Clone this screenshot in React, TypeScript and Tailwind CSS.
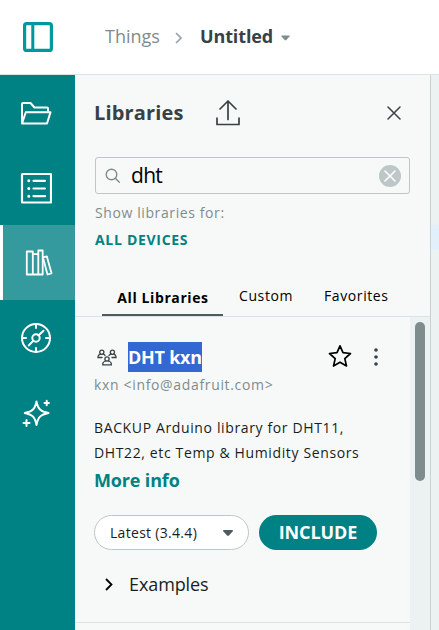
import React from "react";

function PanelIcon() {
  return (
    <svg width="30" height="30" viewBox="0 0 30 30" fill="none" stroke="#00979d">
      <rect x="1.600" y="1.600" width="26.800" height="26.800" rx="2" strokeWidth="3.200" />
      <path d="M9.800 2v26" strokeWidth="3" />
    </svg>
  );
}

function FolderIcon() {
  return (
    <svg width="32" height="24" viewBox="0 0 32 24" fill="none" stroke="#fff" strokeWidth="2" strokeLinejoin="round">
      <path d="M2 21.500V3q0-1 1-1h7.500l4 4.500H27q1 0 1 1V10.500" />
      <path d="M2 22.500L5.800 11.300H30.500L27 22.500Z" />
    </svg>
  );
}

function ListIcon() {
  return (
    <svg width="32" height="32" viewBox="0 0 32 32" fill="none" stroke="#fff" strokeWidth="2.200">
      <rect x="2" y="2" width="29" height="28.500" rx=".5" />
      <path d="M13.500 8.800h11.500M13.500 16.500h11.500M13.500 24.200h11.500" strokeLinecap="round" />
      <path d="M8.800 8.800h.01M8.800 16.500h.01M8.800 24.200h.01" strokeWidth="3" strokeLinecap="round" />
    </svg>
  );
}

function BooksIcon() {
  return (
    <svg width="28" height="28" viewBox="0 0 28 28" fill="none" stroke="#fff" strokeWidth="1.800" strokeLinejoin="round">
      <path d="M1.800 2.500h6v23h-6zM7.800 5.200h5.500v20.300H7.800zM13.300 1.500h4.400v24h-4.400z" />
      <path d="M17.900 8.300l3.900-1 4.700 17-4 1.200z" />
    </svg>
  );
}

function CompassIcon() {
  return (
    <svg width="32" height="32" viewBox="0 0 32 32" fill="none" stroke="#fff" strokeWidth="2" strokeLinecap="round">
      <circle cx="16" cy="16" r="14" />
      <circle cx="16" cy="16" r="3.700" />
      <path d="M16 2v4M16 26v4M2 16h4M26 16h4M18.700 13.200L23.500 8.800M13.200 18.700L8.800 23.400" />
    </svg>
  );
}

function SparkleIcon() {
  return (
    <svg width="28" height="28" viewBox="0 0 28 28" fill="none" stroke="#fff" strokeWidth="2" strokeLinejoin="round" strokeLinecap="round">
      <path d="M14.500 2.500C16 10 18.500 12.600 26.500 14C18.500 15.600 16 18 14.500 26C13 18 10.500 15.600 2.800 14C10.500 12.600 13 10 14.500 2.500Z" />
      <path d="M24.700 1.800v4.400M22.500 4h4.400M4.500 21v6M1.500 24h6" />
    </svg>
  );
}

function UploadIcon() {
  return (
    <svg width="24" height="26" viewBox="0 0 24 26" fill="none" stroke="#374146" strokeWidth="1.700" strokeLinecap="round" strokeLinejoin="round">
      <path d="M12 19.500V1.500M4 9l8-8 8 8M1 18v6.500h22V18" />
    </svg>
  );
}

function SearchIcon() {
  return (
    <svg width="16" height="16" viewBox="0 0 16 16" fill="none" stroke="#7f8c8d" strokeWidth="1.400" strokeLinecap="round">
      <circle cx="6.500" cy="6.500" r="5.300" />
      <path d="M10.300 10.300l4 4" />
    </svg>
  );
}

function CommunityIcon() {
  return (
    <svg width="20" height="17" viewBox="0 0 20 17" fill="none" stroke="#374146" strokeWidth="1.300" strokeLinecap="round">
      <circle cx="4.800" cy="3.200" r="2.100" />
      <circle cx="15.400" cy="3.200" r="2.100" />
      <circle cx="10" cy="10" r="2.100" />
      <path d="M5 8.500H1V7.500Q1.300 5.800 3.500 5.200M6 5.200Q7.500 5.500 8 6.500M15 8.500h4V7.500Q18.700 5.800 16.700 5.200M14.200 5.200Q12.700 5.500 12 6.500M8.500 12Q6 12.800 5.800 14.300V15.800h8.500V14.300Q14 12.800 11.500 12" />
    </svg>
  );
}

function StarIcon() {
  return (
    <svg width="24" height="24" viewBox="0 0 24 24" fill="none" stroke="#000" strokeWidth="1.700" strokeLinejoin="round">
      <path d="M12 1.800l3 6.900 7.500.8-5.700 5.100 1.700 7.400-6.500-3.800-6.500 3.800 1.700-7.400-5.700-5.100 7.500-.8z" />
    </svg>
  );
}

const nav = [
  { name: "Sketchbook", icon: <FolderIcon /> },
  { name: "Examples", icon: <ListIcon /> },
  { name: "Libraries", icon: <BooksIcon />, active: true },
  { name: "Help", icon: <CompassIcon /> },
  { name: "Assistant", icon: <SparkleIcon /> },
];

export default function App() {
  return (
    <div className="flex h-[630px] w-[439px] flex-col overflow-hidden bg-white font-['Open_Sans',sans-serif] whitespace-nowrap">
      <header className="flex h-[75px] shrink-0 items-center border-b border-[#dae3e3] pl-[23px]">
        <PanelIcon />
        <span className="mb-0.5 ml-[52px] text-[18px] leading-6 text-[#7f8c8d]">Things</span>
        <svg className="ml-[15px] mt-0.5" width="7" height="12" viewBox="0 0 7 12" fill="none" stroke="#95a5a6" strokeWidth="1.600"><path d="M1 1l5 5-5 5" /></svg>
        <span className="mb-0.5 ml-[18px] text-[18px] leading-6 font-bold tracking-[-0.1px] text-[#374146]">Untitled</span>
        <svg className="ml-2 mt-0.5" width="9" height="6" viewBox="0 0 9 6" fill="#7f8c8d"><path d="M1 .5h7q1 .2.500 1L5.300 5q-.8.700-1.600 0L.5 1.500Q0 .7 1 .5z" /></svg>
      </header>
      <div className="flex min-h-0 flex-1">
        <nav className="flex w-[75px] shrink-0 flex-col bg-[#008184]">
          {nav.map((item) => (
            <div key={item.name} className={item.active ? "flex h-[75px] items-center justify-center border-l-[3px] border-white bg-[#349a9d] pb-0" : "flex h-[75px] items-center justify-center pr-[3px]"}>
              {item.icon}
            </div>
          ))}
        </nav>
        <main className="flex w-[355px] shrink-0 flex-col bg-[#f7f9f9]">
          <div className="flex h-[82px] shrink-0 items-center pl-[19px] pb-1.5">
            <h1 className="w-[122px] text-[20px] leading-7 font-bold tracking-[0.15px] text-[#374146]">Libraries</h1>
            <UploadIcon />
            <svg className="ml-[147px]" width="14" height="14" viewBox="0 0 14 14" fill="none" stroke="#374146" strokeWidth="1.500" strokeLinecap="round"><path d="M1 1l12 12M13 1L1 13" /></svg>
          </div>
          <div className="ml-5 flex h-[37px] w-[315px] shrink-0 items-center rounded-[3px] border border-[#bdc7c7] pl-[9px] pr-2">
            <SearchIcon />
            <span className="mb-px ml-2.5 flex-1 text-[21px] leading-7 tracking-[-0.7px] text-black">dht</span>
            <svg width="22" height="22" viewBox="0 0 22 22" fill="none"><circle cx="11" cy="11" r="11" fill="#bdc7c7" /><path d="M6 6l10 10M16 6L6 16" stroke="#fff" strokeWidth="1.600" strokeLinecap="round" /></svg>
          </div>
          <p className="mt-[7px] ml-5 text-[14px] leading-6 tracking-[0.6px] text-[#7f8c8d]">Show libraries for:</p>
          <p className="mt-[5px] ml-5 text-[14px] leading-5 font-bold tracking-[0.7px] text-[#008184]">ALL DEVICES</p>
          <div className="mt-[31px] flex h-9 shrink-0 border-b border-[#dae3e3] pl-[27px] text-[14px] leading-6 tracking-[0.6px] text-black">
            <span className="h-[35px] w-[121px] border-b-2 border-[#4e5b61] pt-[5px] pl-px text-center font-bold">All Libraries</span>
            <span className="ml-4 w-[85px] pt-[3px]">Custom</span>
            <span className="pt-[3px]">Favorites</span>
          </div>
          <div className="flex min-h-0 flex-1">
            <article className="h-[306px] w-[335px] border-b border-[#dae3e3] pl-[19px]">
              <div className="flex h-[55px] items-end pl-[3px]">
                <div className="mb-1.5"><CommunityIcon /></div>
                <h2 className="ml-[11px] h-[30px] w-[74px] bg-[#3367d1] text-[18px] leading-[30px] font-bold tracking-[-0.25px] text-white">DHT kxn</h2>
                <div className="mb-[4px] ml-[126px]"><StarIcon /></div>
                <svg className="mb-[5px] ml-[22px]" width="4" height="20" viewBox="0 0 4 20" fill="#374146"><circle cx="2" cy="3" r="1.800" /><circle cx="2" cy="10" r="1.800" /><circle cx="2" cy="17" r="1.800" /></svg>
              </div>
              <p className="mt-px text-[14px] leading-6 tracking-[0.660px] text-[#7f8c8d]">kxn &lt;info@adafruit.com&gt;</p>
              <p className="mt-[18px] text-[14px] leading-[25px] tracking-[0.630px] text-[#171e21]">BACKUP Arduino library for DHT11,<br />DHT22, etc Temp &amp; Humidity Sensors</p>
              <p className="mt-px text-[18px] leading-7 font-bold tracking-[-0.15px] text-[#008184]">More info</p>
              <div className="mt-[21px] flex h-[35px] gap-[10px]">
                <div className="flex w-[155px] items-center justify-between rounded-full border border-[#bdc7c7] bg-white pl-[15px] pr-[15px] text-[14px] text-[#171e21]">
                  <span className="tracking-[0.3px]">Latest (3.4.4)</span>
                  <svg width="10" height="6" viewBox="0 0 10 6" fill="#4e5b61"><path d="M1 0h8q1.500.200.700 1.200L6 5.400q-1 .8-2 0L.3 1.200Q-.5.200 1 0z" /></svg>
                </div>
                <button className="w-[118px] rounded-full bg-[#008184] text-[18px] font-bold tracking-[-0.1px] text-white">INCLUDE</button>
              </div>
              <div className="mt-5 flex h-7 items-center pl-[11px]">
                <svg width="8" height="13" viewBox="0 0 8 13" fill="none" stroke="#000" strokeWidth="1.800"><path d="M1 1l5.500 5.500L1 12" /></svg>
                <span className="ml-4 text-[18px] leading-7 tracking-[-0.1px] text-[#171e21]">Examples</span>
              </div>
            </article>
            <div className="w-5 bg-[#ecf1f1] pt-[5px] pl-[5px]"><div className="h-[159px] w-[10px] rounded-full bg-[#7f8c8d]" /></div>
          </div>
        </main>
        <div className="flex-1 border-l border-[#c9d2d2] bg-[#ecf1f1] pt-[150px]"><div className="h-[25px] bg-[#e1f0fb]" /></div>
      </div>
    </div>
  );
}
